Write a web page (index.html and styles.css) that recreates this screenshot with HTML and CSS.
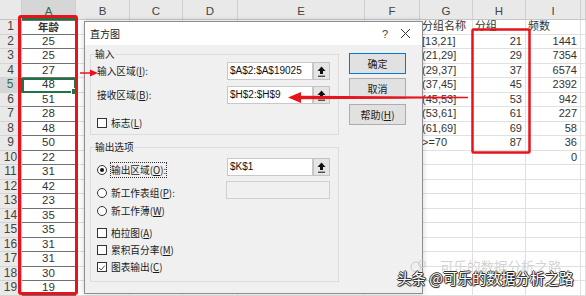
FILE: index.html
```html
<!DOCTYPE html>
<html lang="zh-CN">
<head>
    <meta charset="UTF-8">
    <title>直方图</title>
    <link rel="stylesheet" href="styles.css">
</head>
<body>
    <div class="sheet" id="sheet"></div>

    <div class="dialog">
        <div class="title-bar">
            <span class="title">直方图</span>
            <span class="help">?</span>
            <svg class="close" width="11" height="11" viewBox="0 0 11 11"><path d="M1 1L10 10M10 1L1 10" stroke="#333" stroke-width="1"/></svg>
        </div>
        <div class="dialog-body">
            <div class="groups">
                <fieldset class="group group-in">
                    <legend>输入</legend>
                    <div class="row">
                        <span class="label">输入区域(<u>I</u>):</span>
                        <span class="ref">$A$2:$A$19025</span>
                        <span class="pick"><svg width="9" height="11" viewBox="0 0 9 11"><path d="M4.5 0.5L8.5 5H6V8H3V5H0.5Z" fill="#111"/><path d="M1 10.2H8" stroke="#111" stroke-width="1"/></svg></span>
                    </div>
                    <div class="row">
                        <span class="label">接收区域(<u>B</u>):</span>
                        <span class="ref">$H$2:$H$9</span>
                        <span class="pick"><svg width="9" height="11" viewBox="0 0 9 11"><path d="M4.5 0.5L8.5 5H6V8H3V5H0.5Z" fill="#111"/><path d="M1 10.2H8" stroke="#111" stroke-width="1"/></svg></span>
                    </div>
                    <div class="check-row first">
                        <span class="box"></span>
                        <span>标志(<u>L</u>)</span>
                    </div>
                </fieldset>

                <fieldset class="group group-out">
                    <legend>输出选项</legend>
                    <div class="row opt-row">
                        <span class="label opt"><span class="radio on"></span><span class="focus">输出区域(<u>O</u>):</span></span>
                        <span class="ref">$K$1</span>
                        <span class="pick"><svg width="9" height="11" viewBox="0 0 9 11"><path d="M4.5 0.5L8.5 5H6V8H3V5H0.5Z" fill="#111"/><path d="M1 10.2H8" stroke="#111" stroke-width="1"/></svg></span>
                    </div>
                    <div class="row opt-row second">
                        <span class="label opt"><span class="radio"></span><span>新工作表组(<u>P</u>):</span></span>
                        <span class="ref disabled"></span>
                    </div>
                    <div class="check-row third">
                        <span class="radio"></span>
                        <span>新工作薄(<u>W</u>)</span>
                    </div>
                    <div class="check-row gap">
                        <span class="box"></span>
                        <span>柏拉图(<u>A</u>)</span>
                    </div>
                    <div class="check-row">
                        <span class="box"></span>
                        <span>累积百分率(<u>M</u>)</span>
                    </div>
                    <div class="check-row">
                        <span class="box checked"><svg width="10" height="10" viewBox="0 0 10 10"><path d="M1.5 5L4 7.5L8.5 2" fill="none" stroke="#222" stroke-width="1"/></svg></span>
                        <span>图表输出(<u>C</u>)</span>
                    </div>
                </fieldset>
            </div>

            <div class="buttons">
                <button class="btn default">确定</button>
                <button class="btn">取消</button>
                <button class="btn help-btn">帮助(<u>H</u>)</button>
            </div>
        </div>
    </div>

    <svg class="marks" width="586" height="296" viewBox="0 0 586 296">
        <rect x="19.5" y="16.5" width="57" height="277" rx="1.5" fill="none" stroke="#e8141c" stroke-width="3"/>
        <rect x="472.5" y="29.5" width="57" height="123" rx="1" fill="none" stroke="#e8141c" stroke-width="2.5"/>
        <path d="M468 97.5L300 96.5V98.5Z" fill="#e8141c" stroke="#e8141c" stroke-width="1.6"/>
        <path d="M288 97.5L301 92V103Z" fill="#e8141c"/>
        <path d="M80 73H92" stroke="#e8141c" stroke-width="1.5"/>
        <path d="M98 73L90 69.5V76.5Z" fill="#e8141c"/>
    </svg>

    <div class="ghost">
        <svg width="18" height="14" viewBox="0 0 18 14"><circle cx="6" cy="8" r="5" fill="none" stroke="#ccc" stroke-width="1"/><circle cx="12" cy="5" r="3.5" fill="none" stroke="#ccc" stroke-width="1"/></svg>
        <span>可乐的数据分析之路</span>
    </div>
    <div class="watermark">头条 @可乐的数据分析之路</div>

    <script>
        // 表格数据
        const widths = [22, 54, 54, 53, 55, 127, 55, 53, 53, 55, 5];
        const heads = ['', 'A', 'B', 'C', 'D', 'E', 'F', 'G', 'H', 'I', ''];
        const colA = ['年龄', '25', '25', '27', '48', '51', '28', '48', '50', '22', '31', '42', '23', '35', '35', '31', '31', '30', '19'];
        const colG = ['分组名称', '[13,21]', '(21,29]', '(29,37]', '(37,45]', '(45,53]', '(53,61]', '(61,69]', '>=70'];
        const colH = ['分组', '21', '29', '37', '45', '53', '61', '69', '87'];
        const colI = ['频数', '1441', '7354', '6574', '2392', '942', '227', '58', '36', '0'];

        const sheet = document.getElementById('sheet');
        sheet.style.gridTemplateColumns = widths.map(w => w + 'px').join(' ');

        for (let r = 0; r <= 19; r++) {
            for (let c = 0; c < widths.length; c++) {
                const cell = document.createElement('div');
                cell.className = 'cell';
                if (r === 0) {
                    cell.classList.add('col-head');
                    cell.textContent = heads[c];
                    if (c === 1) cell.classList.add('sel-col');
                } else if (c === 0) {
                    cell.classList.add('row-head');
                    cell.textContent = r;
                    if (r === 5) cell.classList.add('sel-row');
                } else {
                    const i = r - 1;
                    if (c === 1) {
                        cell.classList.add('data');
                        cell.textContent = colA[i];
                        if (r === 1) cell.classList.add('head-cell');
                        if (r === 5) cell.classList.add('active');
                    } else if (c === 7 && colG[i]) {
                        cell.classList.add('left');
                        cell.textContent = colG[i];
                    } else if (c === 8 && colH[i]) {
                        cell.classList.add(r === 1 ? 'left' : 'right');
                        cell.textContent = colH[i];
                    } else if (c === 9 && colI[i]) {
                        cell.classList.add(r === 1 ? 'left' : 'right');
                        cell.textContent = colI[i];
                    }
                }
                sheet.appendChild(cell);
            }
        }
    </script>
</body>
</html>
```

FILE: styles.css
```css
* {
    margin: 0;
    padding: 0;
    box-sizing: border-box;
}

body {
    width: 586px;
    height: 296px;
    overflow: hidden;
    position: relative;
    background-color: #ffffff;
    font-family: 'Liberation Sans', 'Noto Sans CJK SC', sans-serif;
    color: #222;
}

/* spreadsheet */
.sheet {
    display: grid;
    grid-template-rows: 20px repeat(19, 14.5px);
    font-size: 11px;
}

.cell {
    border-right: 1px solid #e0e0e0;
    border-bottom: 1px solid #e0e0e0;
    line-height: 13.5px;
    white-space: nowrap;
    overflow: hidden;
    color: #333;
}

.col-head {
    background-color: #e9e9e9;
    border-right: 1px solid #cfcfcf;
    border-bottom: 1px solid #c6c6c6;
    text-align: center;
    line-height: 22px;
    color: #444;
    font-size: 11.5px;
}

.col-head.sel-col {
    background-color: #d6d6d6;
    border-bottom: 2px solid #217346;
    color: #2f6f48;
}

.row-head {
    background-color: #e9e9e9;
    border-right: 1px solid #c6c6c6;
    border-bottom: 1px solid #d4d4d4;
    text-align: center;
    color: #444;
    font-size: 12px;
}

.row-head.sel-row {
    background-color: #d6d6d6;
    border-right: 2px solid #217346;
    color: #2f6f48;
}

.data {
    text-align: center;
    border-right: 1px solid #707070;
    border-bottom: 1px solid #707070;
    font-size: 11.5px;
}

.head-cell {
    font-weight: bold;
    font-size: 10.5px;
    border-top: 1px solid #707070;
}

.active {
    position: relative;
    overflow: visible;
    outline: 2px solid #217346;
    outline-offset: -2px;
}

.active::after {
    content: '';
    position: absolute;
    right: -3px;
    bottom: -3px;
    width: 5px;
    height: 5px;
    background-color: #217346;
    border: 1px solid #fff;
}

.left {
    padding-left: 2px;
}

.right {
    text-align: right;
    padding-right: 3px;
}

/* dialog */
.dialog {
    position: absolute;
    left: 84px;
    top: 21px;
    width: 339px;
    height: 273px;
    border: 1px solid #8e8e8e;
    background-color: #f0f0f0;
    box-shadow: 0 0 6px rgba(0, 0, 0, 0.18);
    display: flex;
    flex-direction: column;
    font-family: 'Noto Sans CJK SC', 'Liberation Sans', sans-serif;
    font-size: 9.7px;
    color: #1a1a1a;
}

.title-bar {
    height: 23px;
    background-color: #ffffff;
    display: flex;
    align-items: center;
    padding-left: 5px;
}

.title {
    flex: 1;
    font-size: 10px;
}

.help {
    font-family: 'Liberation Sans', sans-serif;
    font-size: 11px;
    color: #444;
    margin-right: 12px;
}

.close {
    margin-right: 11px;
}

.dialog-body {
    display: flex;
    gap: 10px;
    padding: 3px 0 0 5px;
}

.groups {
    width: 249px;
    display: flex;
    flex-direction: column;
    gap: 6px;
}

.group {
    border: 1px solid #dcdcdc;
    padding: 0 8px 4px 5px;
    min-width: 0;
}

.group legend {
    margin-left: -2px;
    padding: 0 1px;
    line-height: 12px;
    color: #222;
}

.group-out {
    padding-bottom: 7px;
}

.row {
    display: flex;
    align-items: center;
    height: 18px;
    margin-top: 2px;
}

.row + .row {
    margin-top: 6px;
}

.label {
    width: 131px;
    padding-left: 1px;
}

.ref {
    width: 86px;
    height: 18px;
    background-color: #ffffff;
    border: 1px solid #c8c8c8;
    font-family: 'Liberation Sans', sans-serif;
    font-size: 10px;
    line-height: 16px;
    padding-left: 2px;
    color: #111;
}

.ref.disabled {
    width: 104px;
    background-color: #f0f0f0;
    border-color: #d0d0d0;
}

.pick {
    width: 17px;
    height: 18px;
    background-color: #e5e5e5;
    border: 1px solid #c3c3c3;
    display: flex;
    align-items: center;
    justify-content: center;
}

.check-row {
    display: flex;
    align-items: center;
    gap: 4px;
    height: 14px;
    margin-top: 3px;
    padding-left: 1px;
}

.check-row.first {
    margin-top: 12px;
}

.box {
    width: 10px;
    height: 10px;
    border: 1px solid #333;
    background-color: #ffffff;
    display: flex;
}

.radio {
    width: 10px;
    height: 10px;
    border: 1px solid #333;
    border-radius: 50%;
    background-color: #ffffff;
    display: inline-flex;
    align-items: center;
    justify-content: center;
}

.radio.on::after {
    content: '';
    width: 4px;
    height: 4px;
    border-radius: 50%;
    background-color: #111;
}

.opt-row {
    align-items: flex-start;
    margin-top: 5px;
}

.group-out .row + .row {
    margin-top: 5px;
}

.opt {
    display: flex;
    align-items: center;
    gap: 4px;
    height: 14px;
    margin-top: 5px;
}

.focus {
    outline: 1px dotted #333;
    outline-offset: 0;
}

.check-row.third {
    margin-top: 5px;
}

.check-row.gap {
    margin-top: 8px;
}

.buttons {
    display: flex;
    flex-direction: column;
    width: 57px;
    padding-top: 5px;
}

.btn {
    height: 21px;
    background-color: #e1e1e1;
    border: 1px solid #adadad;
    font-family: 'Noto Sans CJK SC', sans-serif;
    font-size: 10px;
    color: #1a1a1a;
    margin-bottom: 4px;
}

.btn.default {
    border-color: #0078d7;
}

.btn.help-btn {
    margin-top: 1px;
}

/* marks on top */
.marks {
    position: absolute;
    left: 0;
    top: 0;
}

.ghost {
    position: absolute;
    left: 410px;
    top: 256px;
    display: flex;
    align-items: center;
    gap: 12px;
    font-family: 'Noto Sans CJK SC', sans-serif;
    font-size: 13.5px;
    color: rgba(190, 190, 190, 0.7);
    text-shadow: 0 0 1px #fff;
}

.watermark {
    position: absolute;
    left: 397px;
    top: 268px;
    font-family: 'Noto Sans CJK SC', sans-serif;
    font-size: 14.5px;
    line-height: 20px;
    color: #ffffff;
    white-space: nowrap;
    text-shadow: 1px 0 0 #333, -1px 0 0 #333, 0 1px 0 #333, 0 -1px 0 #333, 1px 1px 1px #333;
}
```
